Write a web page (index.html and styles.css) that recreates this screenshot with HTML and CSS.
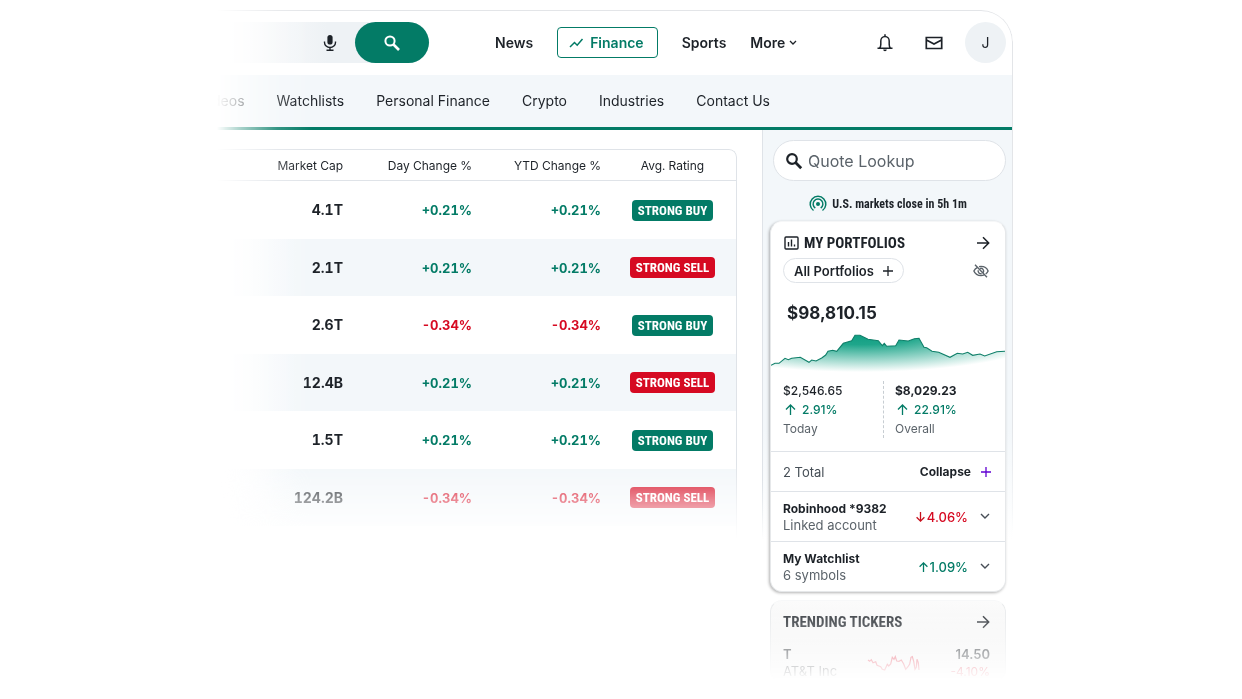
FILE: index.html
```html
<!DOCTYPE html>
<html lang="en">
<head>
<meta charset="utf-8">
<title>Finance</title>
<link rel="stylesheet" href="styles.css">
</head>
<body>
<div class="frame">
  <header class="topbar">
    <form class="search">
      <input class="search-input" type="text" aria-label="Search">
      <button class="icon-button mic" type="button" aria-label="Voice search">
        <svg width="14" height="18" viewBox="0 0 14 18" fill="none" stroke="#1d2228" stroke-width="1.4"><rect x="4.4" y="1" width="5.2" height="9.6" rx="2.6" fill="#1d2228" stroke="none"/><path d="M1.5 7.5v1a5.5 5 0 0 0 11 0v-1M7 13.5v2.500M3.500 16.300h7"/></svg>
      </button>
      <button class="search-button" type="submit" aria-label="Search">
        <svg width="18" height="18" viewBox="0 0 18 18" fill="none" stroke="#fff" stroke-width="2"><circle cx="7" cy="7" r="4.600"/><path d="M10.500 10.500l5.500 5.500" stroke-width="2.600"/></svg>
      </button>
    </form>
    <nav class="primary" aria-label="Primary">
      <a href="#">News</a>
      <a class="current" href="#"><svg width="15" height="10" viewBox="0 0 15 10" fill="none" stroke="#037b66" stroke-width="1.500"><path d="M1 9l4.500-4.500 2.700 2.700L13.500 1"/></svg>Finance</a>
      <a href="#">Sports</a>
      <button class="more" type="button">More<svg width="8" height="6" viewBox="0 0 8 6" fill="none" stroke="#1d2228" stroke-width="1.300"><path d="M1 1l3 3 3-3"/></svg></button>
    </nav>
    <div class="account">
      <button class="icon-button" type="button" aria-label="Notifications">
        <svg width="16" height="18" viewBox="0 0 16 18" fill="none" stroke="#1d2228" stroke-width="1.500"><path d="M.5 14.300h15M2.600 14c1-1 1.200-2 1.200-3.500V7a4.200 4.400 0 0 1 8.400 0v3.500c0 1.500.2 2.500 1.200 3.500M8 .3v2"/><path d="M6.200 15.500h3.600a1.800 1.800 0 0 1-3.600 0z" fill="#1d2228" stroke="none"/></svg>
      </button>
      <button class="icon-button" type="button" aria-label="Mail">
        <svg width="18" height="14" viewBox="0 0 18 14" fill="none" stroke="#1d2228" stroke-width="1.700"><path d="M1.300 1.500h15.400v11H1.300zM1.500 4l7.500 4 7.500-4"/></svg>
      </button>
      <button class="avatar" type="button">J</button>
    </div>
  </header>
  <nav class="subnav" aria-label="Finance">
    <a href="#">Videos</a><a href="#">Watchlists</a><a href="#">Personal Finance</a><a href="#">Crypto</a><a href="#">Industries</a><a href="#">Contact Us</a>
  </nav>
  <div class="columns">
    <main class="main">
      <div class="table-box">
        <table class="stocks">
          <colgroup><col><col class="col-change"><col class="col-change"><col class="col-rating"></colgroup>
          <thead><tr><th scope="col">Market Cap</th><th scope="col">Day Change %</th><th scope="col">YTD Change %</th><th scope="col">Avg. Rating</th></tr></thead>
          <tbody>
            <tr><td>4.1T</td><td class="up">+0.21%</td><td class="up">+0.21%</td><td><span class="tag buy">STRONG BUY</span></td></tr>
            <tr><td>2.1T</td><td class="up">+0.21%</td><td class="up">+0.21%</td><td><span class="tag sell">STRONG SELL</span></td></tr>
            <tr><td>2.6T</td><td class="down">-0.34%</td><td class="down">-0.34%</td><td><span class="tag buy">STRONG BUY</span></td></tr>
            <tr><td>12.4B</td><td class="up">+0.21%</td><td class="up">+0.21%</td><td><span class="tag sell">STRONG SELL</span></td></tr>
            <tr><td>1.5T</td><td class="up">+0.21%</td><td class="up">+0.21%</td><td><span class="tag buy">STRONG BUY</span></td></tr>
            <tr><td>124.2B</td><td class="down">-0.34%</td><td class="down">-0.34%</td><td><span class="tag sell">STRONG SELL</span></td></tr>
          </tbody>
        </table>
      </div>
    </main>
    <aside class="sidebar">
      <label class="lookup">
        <svg width="18" height="18" viewBox="0 0 18 18" fill="none" stroke="#1d2228" stroke-width="2.200"><circle cx="7" cy="7" r="4.800"/><path d="M10.500 10.500l5.700 5.700" stroke-width="2.800"/></svg>
        <input type="text" placeholder="Quote Lookup" aria-label="Quote Lookup">
      </label>
      <p class="status">
        <svg width="18" height="18" viewBox="0 0 18 18" fill="none" stroke="#037b66" stroke-width="1.500"><path d="M4.500 15.500a7.800 7.800 0 1 1 9 0M6.300 13a4.900 4.900 0 1 1 5.400 0"/><circle cx="9" cy="9" r="2" fill="#037b66" stroke="none"/></svg>
        U.S. markets close in 5h 1m
      </p>
      <section class="card">
        <div class="card-head">
          <h2><svg width="15" height="14" viewBox="0 0 15 14" fill="none" stroke="#1d2228" stroke-width="1.400"><rect x="1" y="1" width="13" height="12" rx="1"/><path d="M4.500 6v4.500M7.500 3.500v7M10.500 8.500v2"/></svg>MY PORTFOLIOS</h2>
          <a href="#" aria-label="Open portfolios"><svg width="14" height="14" viewBox="0 0 14 14" fill="none" stroke="#1d2228" stroke-width="1.500"><path d="M1 7h11.500M7 1.300L12.700 7 7 12.700"/></svg></a>
        </div>
        <div class="filter">
          <button class="pill" type="button">All Portfolios<svg width="10" height="10" viewBox="0 0 10 10" stroke="#1d2228" stroke-width="1.300"><path d="M5 0v10M0 5h10"/></svg></button>
          <button class="icon-button" type="button" aria-label="Hide values"><svg width="16" height="14" viewBox="0 0 16 14" fill="none" stroke="#5b636a" stroke-width="1.400"><path d="M4.500 3.400C2.800 4.200 1.500 5.500.9 7c1.100 2.700 3.800 4.600 7.100 4.600 1.200 0 2.300-.3 3.300-.7M6 2.600c.6-.2 1.300-.2 2-.2 3.300 0 6 1.900 7.100 4.600-.5 1.200-1.300 2.200-2.400 3"/><path d="M10.200 8.500A2.700 2.700 0 0 0 7 4.500M5.300 6.200a2.700 2.700 0 0 0 3.400 3.400M2 .8l12 12.400"/></svg></button>
        </div>
        <p class="amount">$98,810.15</p>
        <svg class="chart" viewBox="0 0 234 40" preserveAspectRatio="none" role="img" aria-label="Portfolio value">
          <defs><radialGradient id="area" gradientUnits="userSpaceOnUse" cx="0" cy="0" r="1" gradientTransform="translate(90 0) scale(190 39)"><stop offset="0" stop-color="#0d9c80"/><stop offset=".3" stop-color="#1fa68b"/><stop offset=".65" stop-color="#1fa68b" stop-opacity=".5"/><stop offset="1" stop-color="#1fa68b" stop-opacity="0"/></radialGradient></defs>
          <path fill="url(#area)" d="M0 32.300L4 30.300 8 30.300 14 25.300 17.300 26.700 20.700 25.300 29.300 24.300 38 29.300 40.700 27 45 28 50.700 25 54.700 22 57 18.300 61.700 17.300 65.700 18.300 72.300 10.300 80.700 7.700 84 2.300 89 2.300 97 6.300 107.300 7.700 111.300 12.700 113.300 10.300 115.700 13.300 124.700 12.700 128 7 137.300 8 143.300 5.700 148 5.300 153 14.300 155.700 14.700 161 18.300 167.700 19.300 179 24.300 186.300 20.300 191.700 21 196.700 19.300 201.700 22.300 209 21 213.700 23 225.700 18.700 234 18.300V40H0z"/>
          <path fill="none" stroke="#0f7f69" stroke-width="1.100" d="M0 32.300L4 30.300 8 30.300 14 25.300 17.300 26.700 20.700 25.300 29.300 24.300 38 29.300 40.700 27 45 28 50.700 25 54.700 22 57 18.300 61.700 17.300 65.700 18.300 72.300 10.300 80.700 7.700 84 2.300 89 2.300 97 6.300 107.300 7.700 111.300 12.700 113.300 10.300 115.700 13.300 124.700 12.700 128 7 137.300 8 143.300 5.700 148 5.300 153 14.300 155.700 14.700 161 18.300 167.700 19.300 179 24.300 186.300 20.300 191.700 21 196.700 19.300 201.700 22.300 209 21 213.700 23 225.700 18.700 234 18.300"/>
        </svg>
        <div class="stats">
          <div class="stat"><span class="value">$2,546.65</span><span class="gain"><svg width="11" height="11" viewBox="0 0 11 11" fill="none" stroke="#037b66" stroke-width="1.300"><path d="M5.500 11V1M1 5.500L5.500 1 10 5.500"/></svg>2.91%</span><span class="label">Today</span></div>
          <div class="stat"><span class="value strong">$8,029.23</span><span class="gain"><svg width="11" height="11" viewBox="0 0 11 11" fill="none" stroke="#037b66" stroke-width="1.300"><path d="M5.500 11V1M1 5.500L5.500 1 10 5.500"/></svg>22.91%</span><span class="label">Overall</span></div>
        </div>
        <div class="totals"><span>2 Total</span><button class="collapse" type="button">Collapse<svg width="10" height="10" viewBox="0 0 10 10" stroke="#6001d2" stroke-width="1.300"><path d="M5 0v10M0 5h10"/></svg></button></div>
        <div class="holding">
          <div><strong>Robinhood *9382</strong><span>Linked account</span></div>
          <button class="change down" type="button"><svg width="9" height="10" viewBox="0 0 9 10" fill="none" stroke="#c8101c" stroke-width="1.300"><path d="M4.500 0v9M.6 5.200l3.900 3.900 3.900-3.900"/></svg>4.06%<svg class="chevron" width="10" height="7" viewBox="0 0 10 7" fill="none" stroke="#464e56" stroke-width="1.400"><path d="M1 1l4 4 4-4"/></svg></button>
        </div>
        <div class="holding">
          <div><strong>My Watchlist</strong><span>6 symbols</span></div>
          <button class="change up" type="button"><svg width="9" height="10" viewBox="0 0 9 10" fill="none" stroke="#037b66" stroke-width="1.300"><path d="M4.500 10V1M.6 4.800L4.500.9l3.900 3.900"/></svg>1.09%<svg class="chevron" width="10" height="7" viewBox="0 0 10 7" fill="none" stroke="#464e56" stroke-width="1.400"><path d="M1 1l4 4 4-4"/></svg></button>
        </div>
      </section>
      <section class="card trending">
        <div class="card-head">
          <h2>TRENDING TICKERS</h2>
          <a href="#" aria-label="Open trending tickers"><svg width="14" height="14" viewBox="0 0 14 14" fill="none" stroke="#1d2228" stroke-width="1.500"><path d="M1 7h11.500M7 1.300L12.700 7 7 12.700"/></svg></a>
        </div>
        <div class="ticker">
          <div><strong>T</strong><span>AT&amp;T Inc</span></div>
          <svg width="53" height="18" viewBox="0 0 53 18" fill="none" stroke="#e0344a" stroke-width="1.200"><path d="M1 6L2.700 7.300 4.300 5.700 6 8.700 8.700 7.700 10 11.300 13.700 12.700 15.300 15.300 17.700 16 20.300 10.300 21.700 12 23.700 10 25.300 3.300 27 5.300 28.300 2.700 29.700 7 32 7.300 34.300 6 36.700 10 38.700 15.300 41 12.700 42.700 10 44 3.300 45.300 2.700 46.700 7.300 48 15.300 49.300 13.300 50 5.300 51.300 8.700 52 16"/></svg>
          <div class="quote"><strong>14.50</strong><span>-4.10%</span></div>
        </div>
      </section>
    </aside>
  </div>
</div>
</body>
</html>
```
FILE: styles.css
```css
* { box-sizing: border-box; }
body {
  margin: 0;
  padding: 10px 229px 0 217px;
  background: #fff;
  color: #1d2228;
  font-family: Inter, "Liberation Sans", sans-serif;
  font-size: 14px;
  line-height: 18px;
}
a { color: inherit; text-decoration: none; }
button, input { font: inherit; color: inherit; border: 0; background: none; padding: 0; margin: 0; }
button { display: inline-flex; align-items: center; }
svg { display: block; flex: none; }
p, h2 { margin: 0; }

.frame {
  position: relative;
  overflow: hidden;
  border-top: 1px solid #e3e5e8;
  border-radius: 0 32px 0 0;
  -webkit-mask-image: linear-gradient(to right, transparent 0, rgba(0,0,0,.35) 24px, rgba(0,0,0,.8) 60px, #000 95px);
  mask-image: linear-gradient(to right, transparent 0, rgba(0,0,0,.35) 24px, rgba(0,0,0,.8) 60px, #000 95px);
}
.frame::after {
  content: "";
  position: absolute;
  inset: -1px 0 150px;
  border: 1px solid #e3e5e8;
  border-width: 1px 1px 0 0;
  border-radius: 0 32px 0 0;
  pointer-events: none;
  -webkit-mask-image: linear-gradient(#000 80%, transparent);
  mask-image: linear-gradient(#000 80%, transparent);
}
.topbar { display: flex; align-items: center; height: 64px; padding: 0 7px 1px 0; }
.search { display: flex; align-items: center; width: 212px; height: 41px; border-radius: 0 21px 21px 0; background: linear-gradient(to right, #fff, #eef2f5 110px); }
.search-input { flex: 1; min-width: 0; height: 41px; outline: 0; }
.mic { margin-right: 18px; }
.search-button { justify-content: center; width: 74px; height: 41px; border-radius: 21px; background: #037b66; }
.primary { display: flex; align-items: center; gap: 24px; margin-left: 66px; font-weight: 600; }
.current { display: flex; align-items: center; gap: 6px; height: 31px; padding: 0 13px 0 11px; border: 1px solid #037b66; border-radius: 4px; color: #037b66; }
.more { gap: 4px; font-weight: 600; }
.account { display: flex; align-items: center; gap: 32px; margin-left: auto; }
.avatar { justify-content: center; width: 41px; height: 41px; margin-left: -10px; border-radius: 50%; background: #eef2f5; }

.subnav { display: flex; align-items: center; justify-content: flex-end; gap: 32px; height: 55px; padding-right: 243px; border-bottom: 3px solid #037b66; background: #f3f7fa; white-space: nowrap; }
.columns { display: flex; align-items: stretch; }
.main { flex: 1; min-width: 0; padding: 19px 25px 0 0; }
.table-box {
  height: 400px;
  border: 1px solid #dfe3e8;
  border-width: 1px 1px 0 0;
  border-radius: 0 8px 0 0;
  overflow: hidden;
  -webkit-mask-image: linear-gradient(#000 315px, rgba(0,0,0,.5) 350px, transparent 390px);
  mask-image: linear-gradient(#000 315px, rgba(0,0,0,.5) 350px, transparent 390px);
}
.stocks { width: 100%; table-layout: fixed; border-collapse: separate; border-spacing: 0; text-align: right; font-variant-numeric: tabular-nums; }
.col-change { width: 129px; }
.col-rating { width: 135px; }
.stocks th, .stocks td { padding: 0; }
.stocks th { height: 31px; padding-top: 2px; border-bottom: 1px solid #dfe3e8; font-size: 12px; font-weight: 400; }
.stocks td { height: 57px; font-weight: 700; }
.stocks td.up, .stocks td.down { font-size: 13px; }
.stocks tbody tr:nth-child(odd) td { height: 58px; }
.stocks tbody tr:nth-child(even) { background: linear-gradient(to right, #fff, #f3f7fa 80px); }
.stocks th:last-child, .stocks td:last-child { padding-left: 8px; text-align: center; }
.up, .gain { color: #037b66; }
.down { color: #d60a22; }
.tag { display: inline-block; padding: 0 6px; border-radius: 4px; color: #fff; font: 700 13px/21px "Roboto Condensed", "Liberation Sans Narrow", Roboto, sans-serif; }
.buy { background: #037b66; }
.sell { background: #d60a22; }

.sidebar {
  width: 251px;
  padding: 10px 7px 0;
  border-left: 1px solid #dfe3e8;
  border-image: linear-gradient(#dfe3e8 350px, transparent 410px) 1;
  background: linear-gradient(#f3f7fa 300px, #fff 410px);
}
.lookup { display: flex; align-items: center; gap: 5px; height: 41px; margin-left: 3px; padding: 0 11px; border: 1px solid #dfe3e8; border-radius: 21px; background: #fff; font-size: 16px; }
.lookup input { flex: 1; min-width: 0; outline: 0; }
.lookup input::placeholder { color: #5b636a; opacity: 1; }
.status { display: flex; align-items: center; justify-content: center; gap: 5px; height: 40px; padding-top: 5px; font: 700 12px/18px "Roboto Condensed", "Liberation Sans Narrow", Roboto, sans-serif; }
.card { border: 1px solid #e6e8ea; border-top-color: #f6f7f8; border-radius: 12px; background: #fff; box-shadow: -1px 1px 3px rgba(0,0,0,.3); }
.card-head { display: flex; align-items: center; justify-content: space-between; padding: 12px 15px 0 13px; }
.card h2 { display: flex; align-items: center; gap: 5px; font: 700 15px/18px "Roboto Condensed", "Liberation Sans Narrow", Roboto, sans-serif; }
.filter { display: flex; align-items: center; justify-content: space-between; padding: 6px 16px 0 12px; }
.pill { gap: 9px; height: 25px; padding: 0 10px; border: 1px solid #dfe3e8; border-radius: 13px; font-size: 13px; font-weight: 600; }
.amount { padding: 20px 16px 0; font-size: 17px; font-weight: 700; line-height: 20px; }
.chart { width: 100%; height: 40px; margin-top: 10px; }
.stats { display: grid; grid-template-columns: 112px 1fr; padding: 8px 0 13px; font-size: 12px; line-height: 19px; }
.stat { display: grid; padding-left: 12px; }
.stat + .stat { padding-left: 11px; border-left: 1px dashed #c7cdd2; }
.value { font-weight: 500; }
.strong { font-weight: 700; }
.gain { display: flex; align-items: center; gap: 6px; padding-left: 2px; font-weight: 500; }
.label { color: #5b636a; }
.totals, .holding { display: flex; align-items: center; justify-content: space-between; border-top: 1px solid #dfe3e8; padding: 0 14px 0 12px; font-size: 13px; }
.totals { height: 40px; color: #464e56; }
.collapse { gap: 10px; color: #1d2228; font-size: 12px; font-weight: 700; }
.holding { height: 50px; padding-right: 15px; }
.holding strong { font-size: 12px; }
.holding span, .holding strong, .ticker strong, .ticker span { display: block; line-height: 17px; }
.holding span { color: #5b636a; }
.change { gap: 2px; font-weight: 500; font-size: 13px; }
.chevron { margin-left: 10px; }
.trending {
  height: 82px;
  margin-top: 8px;
  background: linear-gradient(#fafafa, #eee);
  overflow: hidden;
  -webkit-mask-image: linear-gradient(rgba(0,0,0,.9), rgba(0,0,0,.75) 22px, rgba(0,0,0,.35) 54px, transparent 80px);
  mask-image: linear-gradient(rgba(0,0,0,.9), rgba(0,0,0,.75) 22px, rgba(0,0,0,.35) 54px, transparent 80px);
}
.trending .card-head { padding-left: 12px; }
.ticker { display: flex; align-items: center; justify-content: space-between; padding: 15px 15px 0 12px; font-size: 13px; }
.ticker strong { font-weight: 600; }
.quote { text-align: right; }
.quote span { color: #d60a22; font-size: 12px; }
```
